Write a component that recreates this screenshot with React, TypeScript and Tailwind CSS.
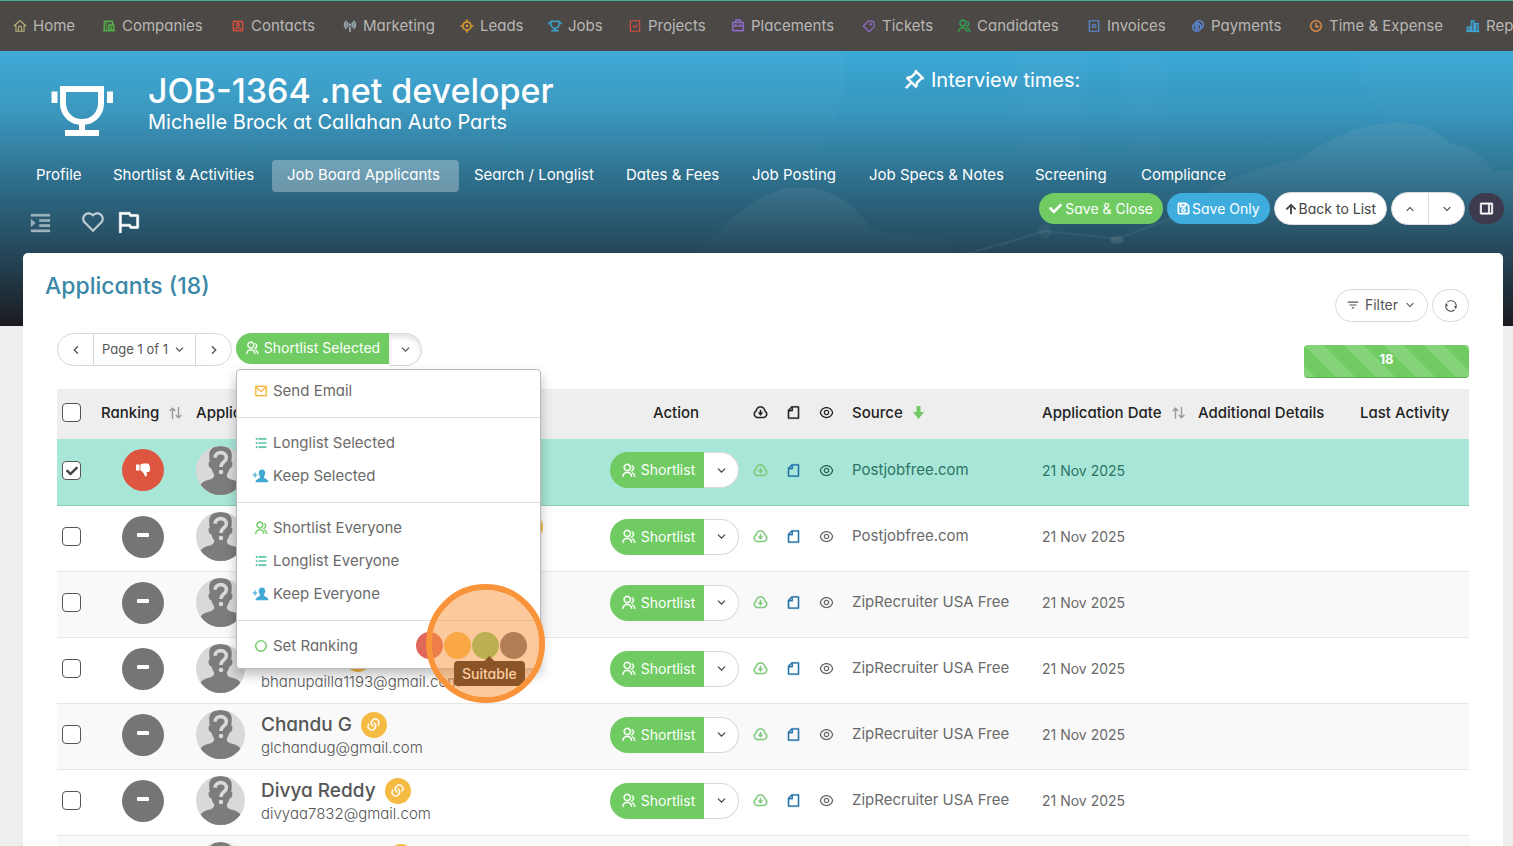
import type { ReactNode } from "react";
import {
  RiHotelLine,
  RiAccountBoxLine,
  RiBroadcastLine,
  RiFocus3Line,
  RiTrophyLine,
  RiTaskLine,
  RiBriefcase2Line,
  RiPriceTag3Line,
  RiGroupLine,
  RiBillLine,
  RiCoinsLine,
  RiTimeLine,
  RiPushpinLine,
  RiIndentIncrease,
  RiHeartLine,
  RiFlagLine,
  RiLayoutRightLine,
  RiArrowDownSLine,
  RiArrowUpSLine,
  RiArrowLeftSLine,
  RiArrowRightSLine,
  RiFilter3Line,
  RiRefreshLine,
  RiMailLine,
  RiListUnordered,
  RiCheckboxBlankCircleLine,
  RiDownloadCloudLine,
  RiFileLine,
  RiEyeLine,
  RiLinksLine,
} from "react-icons/ri";
import { FaCheck, FaRegSave, FaArrowUp } from "react-icons/fa";

function HomeIcon() {
  return (
    <svg width="14" height="14" viewBox="0 0 24 24" fill="none" stroke="#b9b07a" strokeWidth="2" aria-hidden="true">
      <path d="M1.500 12L12 2.500L22.500 12M5 10V21H19V10M9.300 21V15A2.700 2.700 0 0 1 14.700 15V21" />
    </svg>
  );
}

function ReportsIcon() {
  return (
    <svg width="14" height="14" viewBox="0 0 24 24" fill="#3fa9d6" fillOpacity="0.4" stroke="#3fa9d6" strokeWidth="2" aria-hidden="true">
      <path d="M2 14H7V21H2ZM9 3H14V21H9ZM16 8H21V21H16Z" />
      <path d="M1 21.500H23" />
    </svg>
  );
}

function PersonAddIcon() {
  return (
    <svg width="17" height="14" viewBox="0 0 17 14" className="ml-[-2px]" aria-hidden="true">
      <path d="M3 3.500V8.500M.5 6H5.500" stroke="#41a9d2" strokeWidth="1.200" />
      <path
        d="M10 .5C12 .5 13.300 1.800 13.200 3.800C13.500 4.800 13 5.500 12.700 6C12.500 7 12 7.500 11.900 8.200C12 9.500 16.500 10 16.500 13.300H3.500C3.500 10 8 9.500 8.100 8.200C8 7.500 7.500 7 7.300 6C7 5.500 6.500 4.800 6.800 3.800C6.700 1.800 8 .5 10 .5Z"
        fill="#41a9d2"
      />
    </svg>
  );
}

function ThumbsDownIcon() {
  return (
    <svg width="15" height="14" viewBox="0 0 15 14" fill="#fff" aria-hidden="true">
      <path d="M0 1.500H3.500V7.500H0Z" />
      <path d="M4.300 1.800C6 .5 8 .2 12 .5C13 .8 13.200 1.500 13 2C13.900 2.600 14 3.500 13.600 4.200C14.400 5 14.400 6 13.800 6.700C14.200 8 13.500 8.800 12.500 8.900H10.500C11.200 10.500 11.200 13 9.700 13.500C8.300 13.700 8.600 11.500 7.600 10.300C6.500 9.200 6 7.800 4.300 7.500Z" />
    </svg>
  );
}

const navItems: { label: string; icon: ReactNode }[] = [
  { label: "Home", icon: <HomeIcon /> },
  { label: "Companies", icon: <RiHotelLine size={14} className="stroke-[0.5] text-[#57b947]" /> },
  { label: "Contacts", icon: <RiAccountBoxLine size={14} className="stroke-[0.5] text-[#d9523f]" /> },
  { label: "Marketing", icon: <RiBroadcastLine size={14} className="stroke-1 text-[#9fb0b5]" /> },
  { label: "Leads", icon: <RiFocus3Line size={14} className="stroke-[0.5] text-[#e8a42e]" /> },
  { label: "Jobs", icon: <RiTrophyLine size={14} className="stroke-[0.5] text-[#3fa9d6]" /> },
  { label: "Projects", icon: <RiTaskLine size={14} className="text-[#d9523f]" /> },
  { label: "Placements", icon: <RiBriefcase2Line size={14} className="stroke-[0.5] text-[#9470d0]" /> },
  { label: "Tickets", icon: <RiPriceTag3Line size={14} className="text-[#9470d0]" /> },
  { label: "Candidates", icon: <RiGroupLine size={14} className="stroke-[0.5] text-[#35a855]" /> },
  { label: "Invoices", icon: <RiBillLine size={14} className="text-[#5b8fe0]" /> },
  { label: "Payments", icon: <RiCoinsLine size={14} className="stroke-[0.5] text-[#5b8fe0]" /> },
  { label: "Time & Expense", icon: <RiTimeLine size={14} className="stroke-[0.5] text-[#e5924a]" /> },
  { label: "Reports", icon: <ReportsIcon /> },
];

const tabs = [
  "Profile",
  "Shortlist & Activities",
  "Job Board Applicants",
  "Search / Longlist",
  "Dates & Fees",
  "Job Posting",
  "Job Specs & Notes",
  "Screening",
  "Compliance",
];

type Applicant = {
  name: string;
  email: string;
  source: string;
  rejected?: boolean;
};

const applicants: Applicant[] = [
  { name: "Akhil", email: "akhil@gmail.com", source: "Postjobfree.com", rejected: true },
  { name: "Anjaneya Venkata Ramana", email: "anjaneya@gmail.com", source: "Postjobfree.com" },
  { name: "Anusha", email: "anusha@gmail.com", source: "ZipRecruiter USA Free" },
  { name: "Bhanu y", email: "bhanupailla1193@gmail.com", source: "ZipRecruiter USA Free" },
  { name: "Chandu G", email: "glchandug@gmail.com", source: "ZipRecruiter USA Free" },
  { name: "Divya Reddy", email: "divyaa7832@gmail.com", source: "ZipRecruiter USA Free" },
  { name: "Gopi Krishna", email: "gopik@gmail.com", source: "ZipRecruiter USA Free" },
];

function TopNav() {
  return (
    <nav className="h-[51px] shrink-0 overflow-hidden border-t border-[#4fae97] bg-[#4b4846]">
      <ul className="grid h-full grid-cols-[89px_129px_112px_117px_88px_80px_103px_131px_95px_130px_104px_118px_157px_120px] items-center pb-px pl-[13px]">
        {navItems.map(({ label, icon }) => (
          <li key={label}>
            <a href="#" className="flex items-center gap-[6px] text-[15px] leading-5 whitespace-nowrap text-[#b9b7b5]">
              {icon}
              {label}
            </a>
          </li>
        ))}
      </ul>
    </nav>
  );
}

function Backdrop() {
  return (
    <svg
      className="absolute inset-0 h-full w-full"
      viewBox="0 0 1513 275"
      preserveAspectRatio="none"
      aria-hidden="true"
    >
      <defs>
        <linearGradient id="beam" x1="0" y1="0" x2="0" y2="1">
          <stop offset="0" stopColor="#fff" stopOpacity="0.03" />
          <stop offset="1" stopColor="#fff" stopOpacity="0" />
        </linearGradient>
        <linearGradient id="cloud" x1="0" y1="0" x2="0" y2="1">
          <stop offset="0" stopColor="#fff" stopOpacity="0.06" />
          <stop offset="1" stopColor="#fff" stopOpacity="0" />
        </linearGradient>
        <filter id="soften" x="-10%" y="-10%" width="120%" height="120%">
          <feGaussianBlur stdDeviation="4" />
        </filter>
      </defs>
      <path d="M0 0H846Q850 60 800 130H0Z" fill="url(#beam)" />
      <g filter="url(#soften)">
        <path d="M1015 -10H1085V120H1015Z" fill="url(#beam)" />
        <path d="M1120 -10H1163V120H1130Z" fill="url(#beam)" />
        <path d="M1355 -10H1530V90H1420Q1365 60 1355 0Z" fill="url(#beam)" />
      </g>
      <path
        d="M1150 190Q1200 125 1300 108Q1350 72 1395 72Q1430 72 1450 92Q1485 100 1492 120H1513V200H1100Z"
        fill="url(#cloud)"
      />
      <path d="M700 200Q760 130 810 137Q850 142 872 180L950 188V205H700Z" fill="url(#cloud)" />
      <path
        d="M960 205L1045 180L1117 188L1170 168M1000 194L1045 180"
        fill="none"
        stroke="#fff"
        strokeOpacity="0.06"
        strokeWidth="2"
      />
      <circle cx="1045" cy="180" r="7" fill="#fff" fillOpacity="0.05" />
      <ellipse cx="1117" cy="189" rx="7" ry="4" fill="#fff" fillOpacity="0.1" />
    </svg>
  );
}

function JobTrophy() {
  return (
    <svg width="64" height="52" viewBox="0 0 64 52" fill="none" stroke="#fff" aria-hidden="true">
      <path d="M12 3H50V17C50 28 42 36 31 36S12 28 12 17V3Z" strokeWidth="6" />
      <path d="M31 36V46" strokeWidth="6" />
      <path d="M14 47H48" strokeWidth="6" />
      <path d="M3.500 5.500V17M59 5.500V17" strokeWidth="6" />
    </svg>
  );
}

function JobHeader() {
  return (
    <header className="relative h-[275px] shrink-0 bg-[linear-gradient(180deg,#3aa8d6_0%,#3896be_22%,#2e6d89_48%,#25495c_72%,#1b1c20_100%)] text-white">
      <Backdrop />
      <div className="relative flex pt-[23px]">
        <div className="flex flex-1">
          <div className="w-[148px] pt-3 pl-[51px]">
            <JobTrophy />
          </div>
          <div>
            <h1 className="text-[34px] leading-[34px] font-medium">JOB-1364 .net developer</h1>
            <p className="text-[20px] leading-[28px] whitespace-nowrap">Michelle Brock at Callahan Auto Parts</p>
          </div>
        </div>
        <p className="-mt-2 flex h-7 w-[611px] items-center gap-[5px] text-[20px] leading-7">
          <RiPushpinLine size={24} className="stroke-[0.5]" />
          Interview times:
        </p>
      </div>
      <nav className="relative mt-[22px] grid grid-cols-[77px_174px_187px_152px_126px_117px_166px_106px_120px] pl-[21px]">
        {tabs.map((tab) => (
          <a
            key={tab}
            href="#"
            className={
              tab === "Job Board Applicants"
                ? "h-8 rounded-[4px] bg-white/30 pl-[15px] text-[15px] leading-[30px] whitespace-nowrap"
                : "h-8 pl-[15px] text-[15px] leading-[30px] whitespace-nowrap"
            }
          >
            {tab}
          </a>
        ))}
      </nav>
      <div className="relative flex items-start justify-between pr-[9px] pl-[28px]">
        <div className="flex items-center pt-[17px]">
          <button aria-label="Toggle sidebar" className="mr-[27px] text-white/50">
            <RiIndentIncrease size={25} className="stroke-[0.5]" />
          </button>
          <button aria-label="Add to favourites" className="mr-[10px] text-white/70">
            <RiHeartLine size={26} />
          </button>
          <button aria-label="Flag">
            <RiFlagLine size={26} className="stroke-[0.5]" />
          </button>
        </div>
        <div className="flex items-center gap-1 text-[14px] leading-5">
          <button className="flex h-[31px] items-center gap-[3px] rounded-full bg-[#6fcb62] px-[10px]">
            <FaCheck size={13} />
            Save &amp; Close
          </button>
          <button className="flex h-[31px] items-center gap-[2px] rounded-full bg-[#3eadde] px-[10px]">
            <FaRegSave size={13} className="stroke-[20]" />
            Save Only
          </button>
          <button className="flex h-[33px] items-center gap-[2px] rounded-full border border-[#ddd] bg-white px-[10px] text-[#444]">
            <FaArrowUp size={12} />
            Back to List
          </button>
          <div className="flex h-[33px] overflow-hidden rounded-full border border-[#ddd] bg-white text-[#444]">
            <button aria-label="Previous job" className="flex w-9 items-center justify-center">
              <RiArrowUpSLine size={14} />
            </button>
            <button aria-label="Next job" className="flex w-9 items-center justify-center border-l border-[#ddd]">
              <RiArrowDownSLine size={14} />
            </button>
          </div>
          <button aria-label="Side panel" className="flex h-[31px] w-[35px] items-center justify-center rounded-full bg-[#3d3a4e]">
            <RiLayoutRightLine size={15} className="stroke-1" />
          </button>
        </div>
      </div>
    </header>
  );
}

function MenuItem({ icon, children }: { icon: ReactNode; children: ReactNode }) {
  return (
    <button className="flex h-[33px] w-full items-center pb-[2px] pl-[17px] text-left">
      <span className="flex w-[19px] shrink-0">{icon}</span>
      {children}
    </button>
  );
}

function MenuDivider() {
  return <hr className="my-[9px] border-t border-[#ddd]" />;
}

function BulkMenu() {
  return (
    <div className="absolute top-[36px] left-0 z-20 w-[305px] rounded-[4px] border border-[#bbb] bg-white py-[5px] text-[15px] leading-5 text-[#6a6a6a] shadow-[0_6px_12px_rgba(0,0,0,0.25)]">
      <MenuItem icon={<RiMailLine size={14} className="stroke-[0.5] text-[#f5ba42]" />}>Send Email</MenuItem>
      <MenuDivider />
      <MenuItem icon={<RiListUnordered size={14} className="stroke-[0.5] text-[#3fb99b]" />}>Longlist Selected</MenuItem>
      <MenuItem icon={<PersonAddIcon />}>Keep Selected</MenuItem>
      <MenuDivider />
      <MenuItem icon={<RiGroupLine size={14} className="stroke-[0.5] text-[#6fcb62]" />}>Shortlist Everyone</MenuItem>
      <MenuItem icon={<RiListUnordered size={14} className="stroke-[0.5] text-[#3fb99b]" />}>Longlist Everyone</MenuItem>
      <MenuItem icon={<PersonAddIcon />}>Keep Everyone</MenuItem>
      <MenuDivider />
      <div className="flex h-[33px] items-center pr-[13px] pb-[2px] pl-[17px]">
        <span className="flex w-[19px]">
          <RiCheckboxBlankCircleLine size={14} className="stroke-[0.5] text-[#6fcb62]" />
        </span>
        <span className="flex-1">Set Ranking</span>
        <div className="flex gap-px">
          <button aria-label="Unsuitable" className="size-[27px] rounded-full bg-[#e0675a]" />
          <button aria-label="Maybe" className="size-[27px] rounded-full bg-[#f8bd4e]" />
          <span className="relative flex">
            <button aria-label="Suitable" className="size-[27px] rounded-full bg-[#7bcc69]" />
            <span className="absolute top-[24px] left-[-18px] flex flex-col items-center">
              <span className="h-[5px] w-[10px] bg-[#1b1411] [clip-path:polygon(50%_0,100%_100%,0_100%)]" />
              <span className="rounded-[4px] bg-[#1b1411] px-2 text-[14px] leading-[25px] font-medium text-white">
                Suitable
              </span>
            </span>
            <span className="pointer-events-none absolute top-[-48px] left-[-46px] size-[119px] rounded-full border-[6px] border-[#f9943b] bg-[#f9943b]/50 bg-clip-padding" />
          </span>
          <button aria-label="Not ranked" className="size-[27px] rounded-full bg-[#6b686d]" />
        </div>
      </div>
    </div>
  );
}

function Toolbar() {
  return (
    <div className="flex items-start justify-between pr-[34px] pl-[34px]">
      <div className="flex gap-1 text-[14px] leading-5 text-[#555]">
        <div className="flex h-[33px] rounded-full border border-[#d8d8d8]">
          <button aria-label="Previous page" className="flex w-[35px] items-center justify-center">
            <RiArrowLeftSLine size={16} />
          </button>
          <button className="flex w-[103px] items-center justify-center gap-1 border-x border-[#d8d8d8] pb-px text-[13px] whitespace-nowrap">
            Page 1 of 1
            <RiArrowDownSLine size={15} />
          </button>
          <button aria-label="Next page" className="flex w-[35px] items-center justify-center">
            <RiArrowRightSLine size={16} />
          </button>
        </div>
        <div className="relative flex">
          <button className="flex h-[31px] w-[153px] items-center justify-center gap-[5px] rounded-l-full bg-[#6fcb62] pb-px whitespace-nowrap text-white">
            <RiGroupLine size={14} className="stroke-[0.5]" />
            Shortlist Selected
          </button>
          <button
            aria-label="More bulk actions"
            className="flex h-[33px] w-[33px] items-center justify-center rounded-r-full border border-l-0 border-[#d8d8d8] shadow-[inset_0_3px_5px_rgba(0,0,0,0.125)]"
          >
            <RiArrowDownSLine size={15} />
          </button>
          <BulkMenu />
        </div>
      </div>
      <div className="mt-3 h-[33px] w-[165px] rounded-[4px] border-b border-[#5cab52] bg-[#6fcb62] bg-[linear-gradient(45deg,rgba(255,255,255,.15)_25%,transparent_25%,transparent_50%,rgba(255,255,255,.15)_50%,rgba(255,255,255,.15)_75%,transparent_75%,transparent)] bg-[length:40px_40px] text-center text-[13px] leading-[29px] font-bold text-white">
        18
      </div>
    </div>
  );
}

function SortArrows() {
  return (
    <svg width="13" height="12" viewBox="0 0 13 12" fill="none" stroke="#999" strokeWidth="1.400" aria-hidden="true">
      <path d="M3.500 12V1.500M.7 4L3.500 1.200L6.200 4M9.500 0V10.500M6.800 8L9.500 10.800L12.300 8" />
    </svg>
  );
}

function Avatar() {
  return (
    <svg width="49" height="49" viewBox="0 0 50 50" className="shrink-0" aria-hidden="true">
      <defs>
        <clipPath id="round">
          <circle cx="25" cy="25" r="25" />
        </clipPath>
      </defs>
      <g clipPath="url(#round)">
        <rect width="50" height="50" fill="#d9d9d9" />
        <path
          d="M25 0C18 0 13.500 3 13.500 9C13.500 12 13.700 14 14 16C12.500 16 12.500 19 13.500 21C14 22.500 15 23 15.800 23C16.500 26 18 28 18.500 29C18.800 32 17 33.500 13 34.500C8 36 5.500 37.500 4.500 40V50H45.500V40C44.500 37.500 42 36 37 34.500C33 33.500 31.200 32 31.500 29C32 28 33.500 26 34.200 23C35 23 36 22.500 36.500 21C37.500 19 37.500 16 36 16C36.300 14 36.500 12 36.500 9C36.500 3 32 0 25 0Z"
          fill="#7c7c7c"
        />
        <path d="M19.500 12C19.500 5 31 5 31 12C31 16.500 25.500 16 25.500 21.500" fill="none" stroke="#d9d9d9" strokeWidth="3.600" />
        <circle cx="25.500" cy="26.500" r="2.300" fill="#d9d9d9" />
      </g>
    </svg>
  );
}

function SelectBox({ label, checked }: { label: string; checked?: boolean }) {
  return (
    <span className="relative flex size-[19px]">
      <input
        type="checkbox"
        aria-label={label}
        defaultChecked={checked}
        className="peer size-[19px] appearance-none rounded-[4px] border border-[#555] bg-white"
      />
      <FaCheck size={12} className="pointer-events-none absolute top-1 left-1 hidden text-[#444] peer-checked:block" />
    </span>
  );
}

function ApplicantRow({ applicant, index }: { applicant: Applicant; index: number }) {
  const { name, email, source, rejected } = applicant;
  const tone = rejected
    ? "border-[#86cfbb] bg-[#a8e6d7] text-[#2c7565]"
    : index % 2 === 0
      ? "border-[#e6e6e6] bg-[#f9f9f9] text-[#6a6a6a]"
      : "border-[#e6e6e6] bg-white text-[#6a6a6a]";
  return (
    <tr className={`h-[66px] border-b *:pb-[3px] ${tone}`}>
      <td className="pl-[5px]">
        <SelectBox label={`Select ${name}`} checked={rejected} />
      </td>
      <td>
        <button
          aria-label="Ranking"
          className={
            rejected
              ? "ml-[28px] flex size-[42px] items-center justify-center rounded-full bg-[#df5640] text-white"
              : "ml-[28px] flex size-[42px] items-center justify-center rounded-full bg-[#757575] text-white"
          }
        >
          {rejected ? <ThumbsDownIcon /> : <span className="mb-[3px] h-1 w-3 rounded-[1px] bg-white" />}
        </button>
      </td>
      <td>
        <div className="flex items-center gap-4 pl-2">
          <Avatar />
          <div>
            <div className="flex items-center gap-[9px] text-[19px] leading-[26px] font-medium whitespace-nowrap text-[#555]">
              {name}
              <span className="flex size-[26px] items-center justify-center rounded-full bg-[#f5ba42] text-white">
                <RiLinksLine size={15} className="stroke-[0.5]" />
              </span>
            </div>
            <div className="text-[15px] leading-5 font-light text-[#555]">{email}</div>
          </div>
        </div>
      </td>
      <td>
        <div className="flex pl-2 text-[14px] leading-5">
          <button className="flex h-9 w-[94px] items-center justify-center gap-[5px] rounded-l-full bg-[#6fcb62] pl-[2px] text-white">
            <RiGroupLine size={15} className="stroke-[0.5]" />
            Shortlist
          </button>
          <button
            aria-label="More actions"
            className="flex h-9 w-[35px] items-center justify-center rounded-r-full border border-l-0 border-[#d8d8d8] bg-white text-[#444]"
          >
            <RiArrowDownSLine size={15} />
          </button>
        </div>
      </td>
      <td>
        <RiDownloadCloudLine size={15} className="mx-auto stroke-[0.5] text-[#7fc97a]" />
      </td>
      <td>
        <RiFileLine size={15} className="mx-auto stroke-[0.5] text-[#2573a8]" />
      </td>
      <td>
        <RiEyeLine size={15} className={rejected ? "mx-auto text-[#2c6055]" : "mx-auto text-[#666]"} />
      </td>
      <td className="pl-[9px] text-[15px] whitespace-nowrap">{source}</td>
      <td className="pl-2 text-[14px]">21 Nov 2025</td>
      <td />
      <td />
    </tr>
  );
}

function ApplicantTable() {
  return (
    <table className="w-full table-fixed border-collapse">
      <colgroup>
        <col className="w-[37px]" />
        <col className="w-[94px]" />
        <col />
        <col className="w-[142px]" />
        <col className="w-[33px]" />
        <col className="w-[33px]" />
        <col className="w-[33px]" />
        <col className="w-[191px]" />
        <col className="w-[156px]" />
        <col className="w-[162px]" />
        <col className="w-[117px]" />
      </colgroup>
      <thead>
        <tr className="h-[50px] bg-[#eee] text-left text-[15px] leading-5 whitespace-nowrap text-[#222] *:pb-[3px]">
          <th className="pl-[5px]">
            <SelectBox label="Select all" />
          </th>
          <th className="pl-[7px] font-medium">
            <span className="flex items-center gap-[10px]">
              Ranking <SortArrows />
            </span>
          </th>
          <th className="pl-2 font-medium">Applicant</th>
          <th className="pl-[6px] pr-0 text-center font-medium">Action</th>
          <th>
            <RiDownloadCloudLine size={15} className="mx-auto stroke-[0.5]" />
          </th>
          <th>
            <RiFileLine size={15} className="mx-auto stroke-[0.5]" />
          </th>
          <th>
            <RiEyeLine size={15} className="mx-auto" />
          </th>
          <th className="pl-[9px] font-medium">
            <span className="flex items-center gap-[10px]">
              Source
              <svg width="11" height="13" viewBox="0 0 11 13" fill="#6fcb62" aria-hidden="true">
                <path d="M3.500 0H7.500V6H11L5.500 13L0 6H3.500Z" />
              </svg>
            </span>
          </th>
          <th className="pl-2 font-medium">
            <span className="flex items-center gap-[10px]">
              Application Date <SortArrows />
            </span>
          </th>
          <th className="pl-2 font-medium">Additional Details</th>
          <th className="pl-2 font-medium">Last Activity</th>
        </tr>
      </thead>
      <tbody>
        {applicants.map((applicant, index) => (
          <ApplicantRow key={applicant.email} applicant={applicant} index={index} />
        ))}
      </tbody>
    </table>
  );
}

export default function App() {
  return (
    <div className="flex h-screen flex-col overflow-hidden bg-[#eee] font-['Inter','Open_Sans',sans-serif] [font-feature-settings:'cv11']">
      <TopNav />
      <JobHeader />
      <main className="relative mt-[-73px] mr-[10px] ml-[23px] flex-1 rounded-t-[5px] bg-white">
        <div className="flex h-20 justify-between pr-[34px] pl-[22px]">
          <h2 className="pt-[18px] text-[23px] leading-[30px] font-medium text-[#3a87a8]">Applicants (18)</h2>
          <div className="flex gap-1 pt-9 text-[14px] leading-5 text-[#555]">
            <button className="flex h-[33px] w-[93px] items-center justify-center gap-[5px] rounded-full border border-[#d8d8d8] pb-px">
              <RiFilter3Line size={14} />
              Filter
              <RiArrowDownSLine size={14} />
            </button>
            <button aria-label="Refresh" className="flex h-[33px] w-[37px] items-center justify-center rounded-full border border-[#d8d8d8]">
              <RiRefreshLine size={14} />
            </button>
          </div>
        </div>
        <Toolbar />
        <div className="mt-[11px] pr-[34px] pl-[34px]">
          <ApplicantTable />
        </div>
      </main>
    </div>
  );
}
